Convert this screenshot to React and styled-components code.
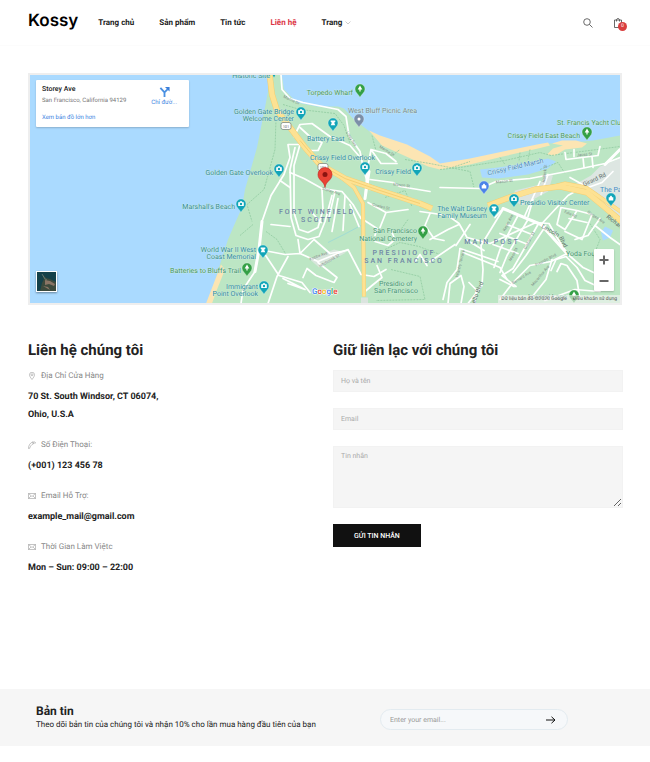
import React, {useState} from 'react'
import styled, {createGlobalStyle} from 'styled-components'

const navItems = ['Trang chủ', 'Sản phẩm', 'Tin tức', 'Liên hệ', 'Trang']

const contacts = [
  {icon: 'pin', label: 'Địa Chỉ Cửa Hàng', lines: ['70 St. South Windsor, CT 06074,', 'Ohio, U.S.A']},
  {icon: 'phone', label: 'Số Điện Thoại:', lines: ['(+001) 123 456 78']},
  {icon: 'mail', label: 'Email Hỗ Trợ:', lines: ['example_mail@gmail.com']},
  {icon: 'mail', label: 'Thời Gian Làm Việtc', lines: ['Mon – Sun: 09:00 – 22:00']},
]

const TEAL = '#12a5b8'
const GREEN = '#34a046'

// x, y is the tip of the pin
const pins = [
  {x: 360, y: 98, color: GREEN, kind: 'tree'},
  {x: 301, y: 121, color: TEAL, kind: 'camera'},
  {x: 333, y: 132, color: TEAL, kind: 'tower'},
  {x: 359, y: 128, color: '#7b8fa8', kind: 'dot'},
  {x: 365, y: 176, color: TEAL, kind: 'camera'},
  {x: 417, y: 177, color: TEAL, kind: 'camera'},
  {x: 279, y: 178, color: TEAL, kind: 'camera'},
  {x: 241, y: 213, color: TEAL, kind: 'camera'},
  {x: 263, y: 259, color: TEAL, kind: 'tower'},
  {x: 247, y: 277, color: GREEN, kind: 'tree'},
  {x: 264, y: 295, color: TEAL, kind: 'camera'},
  {x: 423, y: 240, color: GREEN, kind: 'tree'},
  {x: 484, y: 195, color: '#4a83e8', kind: 'bag'},
  {x: 494, y: 218, color: TEAL, kind: 'tower'},
  {x: 514, y: 208, color: TEAL, kind: 'camera'},
  {x: 587, y: 141, color: GREEN, kind: 'tree'},
  {x: 611, y: 207, color: TEAL, kind: 'bag'},
  {x: 574, y: 304, color: GREEN, kind: 'tree'},
]

const places = [
  {x: 270, y: 78, text: 'Historic Site', end: true},
  {x: 353, y: 95, text: 'Torpedo Wharf', end: true, tone: 'green'},
  {x: 294, y: 114, text: 'Golden Gate Bridge', end: true},
  {x: 294, y: 121, text: 'Welcome Center', end: true},
  {x: 348, y: 113, text: 'West Bluff Picnic Area', tone: 'gray'},
  {x: 307, y: 141, text: 'Battery East'},
  {x: 310, y: 160, text: 'Crissy Field Overlook'},
  {x: 411, y: 174, text: 'Crissy Field', end: true},
  {x: 273, y: 175, text: 'Golden Gate Overlook', end: true},
  {x: 235, y: 209, text: 'Marshall\'s Beach', end: true},
  {x: 256, y: 252, text: 'World War II West', end: true},
  {x: 256, y: 259, text: 'Coast Memorial', end: true},
  {x: 241, y: 273, text: 'Batteries to Bluffs Trail', end: true, tone: 'green'},
  {x: 258, y: 289, text: 'Immigrant', end: true},
  {x: 258, y: 296, text: 'Point Overlook', end: true},
  {x: 417, y: 233, text: 'San Francisco', end: true, tone: 'green'},
  {x: 417, y: 241, text: 'National Cemetery', end: true, tone: 'green'},
  {x: 379, y: 286, text: 'Presidio of', tone: 'green'},
  {x: 374, y: 293, text: 'San Francisco', tone: 'green'},
  {x: 487, y: 211, text: 'The Walt Disney', end: true},
  {x: 487, y: 218, text: 'Family Museum', end: true},
  {x: 520, y: 205, text: 'Presidio Visitor Center'},
  {x: 580, y: 138, text: 'Crissy Field East Beach', end: true, tone: 'green'},
  {x: 557, y: 125, text: 'St. Francis Yacht Club', tone: 'green'},
  {x: 600, y: 192, text: 'The Palace', tone: 'blue'},
  {x: 566, y: 256, text: 'Yoda Fountain', tone: 'green'},
  {x: 528, y: 299, text: 'Lovers\' Lane', tone: 'green'},
]

const areas = [
  {x: 317, y: 214, text: 'FORT WINFIELD'},
  {x: 317, y: 222, text: 'SCOTT'},
  {x: 404, y: 255, text: 'PRESIDIO OF'},
  {x: 404, y: 263, text: 'SAN FRANCISCO'},
  {x: 492, y: 244, text: 'MAIN POST'},
]

const streets = [
  {x: 283, y: 98, turn: 25, text: 'Marine Dr'},
  {x: 346, y: 133, turn: 58, text: 'Long Ave'},
  {x: 379, y: 148, turn: 32, text: 'Marine Dr'},
  {x: 393, y: 186, turn: 6, text: 'Mason St'},
  {x: 322, y: 190, turn: 18, text: 'Storey Ave'},
  {x: 496, y: 184, turn: -6, text: 'Mason St'},
  {x: 577, y: 157, turn: -5, text: 'Jauss St'},
  {x: 564, y: 213, turn: 24, text: 'Edie Rd'},
  {x: 587, y: 213, turn: 34, text: 'Gorgas Ave'},
  {x: 310, y: 261, turn: -20, text: 'Kobbe Ave'},
  {x: 320, y: 268, turn: -30, text: 'Hitchcock St'},
  {x: 372, y: 206, turn: 14, text: 'Cowles St'},
  {x: 458, y: 278, turn: -76, text: 'Infantry Terrace'},
  {x: 511, y: 262, turn: -62, text: 'Mesa St'},
  {x: 526, y: 250, turn: -62, text: 'Graham St'},
  {x: 505, y: 232, turn: -62, text: 'Keyes Ave'},
  {x: 536, y: 267, turn: -28, text: 'Presidio Blvd'},
  {x: 513, y: 285, turn: -32, text: 'Barnard Ave'},
  {x: 533, y: 287, turn: -50, text: 'Macarthur Ave'},
  {x: 545, y: 183, turn: -84, text: 'Halleck St'},
]

const roads = [
  'M281 75 L282 90 L290 99 L303 103 L338 110 L346 117 L349 136 L360 152 L364 172 L370 190',
  'M294 137 L300 125 L312 124 L330 137 L350 146 L362 160',
  'M300 128 L312 139 L322 143 L318 151 L309 151',
  'M303 145 L288 145 L290 158 L284 175 L271 196 L262 222 L259 250 L255 272 L243 290 L241 304',
  'M295 148 L290 170 L291 218 L296 236 L308 240 L319 237 L325 222 L332 196',
  'M300 145 L294 166 L294 213 L299 230 L308 233 L318 228 L323 210 L322 190',
  'M290 173 L304 179 L322 189 L342 192 L353 205 L361 219',
  'M259 250 L285 255 L300 254 L318 262 L340 253 L348 250 L361 275 L374 277 L386 270',
  'M288 257 L277 277 L268 304',
  'M263 252 L279 276 L302 283 L310 293',
  'M283 279 L305 290 L288 284',
  'M318 263 L337 278 L334 283 L316 276 L307 269 L303 278',
  'M298 240 L300 254 L314 240 L330 254 L347 251',
  'M335 192 L329 218 M345 196 L343 231 M350 205 L359 227 M338 199 L332 232',
  'M271 225 L290 227 M290 188 L280 181',
  'M365 198 L367 172 L371 150 L386 154 L396 162 M371 150 L381 164 L397 164',
  'M370 180 L393 183 L400 187 L430 192',
  'M368 203 L386 213 L408 210 M380 228 L386 213',
  'M375 242 L388 246 L395 240 L392 233',
  'M363 220 L377 229 L375 236',
  'M377 266 L382 278 L372 286 L365 292',
  'M440 188 L480 189 L496 182 L530 179 L572 171 L605 164 L620 158',
  'M565 153 L566 160 L598 156 L600 147 M574 157 L574 150 M583 158 L584 168 M592 157 L593 168',
  'M613 172 L602 183 L588 188 L570 178',
  'M420 212 L448 216 L459 224 L467 238 L490 244 L536 223 L549 224 L557 238 L567 254 L583 268 L600 276',
  'M495 218 L503 209 L515 214 L541 225 L568 196 L575 192',
  'M503 210 L481 246 L483 270 L482 286 L475 295 L468 304',
  'M470 225 L456 246 M463 253 L500 268 L507 280 M466 240 L484 251 M460 249 L498 262',
  'M518 216 L500 250 L494 268 M528 220 L507 256 L500 273 M538 225 L513 269 L502 276 L516 287',
  'M546 226 L526 256 L513 273 M507 225 L532 235 M500 234 L528 245 M493 245 L518 254',
  'M533 200 L528 217 M540 182 L524 218 M548 175 L541 195',
  'M561 208 L557 225 L565 230 L577 211 L561 208 M577 211 L592 215 L582 240 L565 232',
  'M600 219 L588 236 L575 240 M569 219 L587 223',
  'M567 254 L551 262 L530 266 L513 283 L500 300',
  'M552 260 L546 280 L530 300 M500 280 L514 287',
  'M551 271 L556 260 L566 257 L577 268 L585 281 L600 288',
  'M557 272 L561 264 L567 266 L577 281 L580 300',
  'M460 249 L457 270 L447 283 L443 300 M448 304 L450 284 L461 276 L464 287 L461 304',
  'M475 304 L476 290 L469 283',
  'M415 262 L420 255 L427 266 M595 226 L610 238 L620 245 M545 301 L575 290 L600 292',
  'M430 240 L448 230 L459 225 M455 245 L430 262',
  'M310 211 L321 223 M430 214 L425 226 L434 239 L444 241',
]

const trails = [
  'M276 120 L275 150 L264 190 L247 205 L252 222',
  'M283 105 L300 110 L335 114 L344 126 L350 144',
  'M372 136 L376 151 L392 156 L400 150',
  'M440 170 L460 168 L505 161 L540 153 L551 156 L620 147',
  'M405 160 L430 164 L470 172 L474 188 M452 168 L470 162',
  'M530 150 L528 160 M520 153 L519 162 M500 158 L505 165',
  'M385 250 L400 243 L419 247 L440 255 M391 270 L420 277 L425 300 L376 301',
  'M385 198 L405 191 L412 207 M408 220 L398 234',
  'M266 232 L277 240 L286 255 M240 236 L253 225',
  'M540 170 L558 163 L565 174 M590 224 L600 240 L593 258',
]

// the parkway runs underground between the two halves
const highway = 'M269 70L272 95 277 111 290 128 305 148 320 165 345 179 380 191 420 204 432 209M488 206L512 197 535 190 560 187 587 193 605 208 625 225'
const ramps = 'M335 173L354 188 363 204 364 297M350 181L370 187 392 195M542 190L565 184 586 188 622 213'

function InfoIcon({kind}) {
  return (
    <LineIcon viewBox="0 0 16 16" aria-hidden="true">
      {kind === 'pin' && <path d="M8 15C5 11 3 8.500 3 5.500a5 5 0 0 1 10 0C13 8.500 11 11 8 15zM8 3.500a2 2 0 1 0 0 4 2 2 0 0 0 0-4z"/>}
      {kind === 'phone' && <path d="M1 15C1 9 4 4 9 2l1.500 3.500L8 7C6 9 4 12 3.500 14.500zM9 2l1.500-.7 1.500 3.500-1.500.7M12 2c3-1 4 2 1.500 3.500"/>}
      {kind === 'mail' && <path d="M1 3h14v10H1zM1 3l7 6 7-6M1 13l5-5M15 13l-5-5"/>}
    </LineIcon>
  )
}

function Pin({x, y, color, kind}) {
  return (
    <g transform={`translate(${x} ${y})`}>
      <path d="M0 0C-1-3-5-5-5-8.500a5 5 0 0 1 10 0C5-5 1-3 0 0z" fill={color} stroke="#fff" strokeWidth="0.300"/>
      {kind === 'camera' && <path d="M-2.800-10.300h1.300l.6-.9h1.800l.6.9h1.300v3.800h-5.600zM0-9.700a1.200 1.200 0 1 0 0 2.400 1.200 1.200 0 0 0 0-2.400z" fill="#fff" fillRule="evenodd"/>}
      {kind === 'tower' && <path d="M-2.300-11h4.600v1.500h-.8v1.800l.8 1.500h-4.600l.8-1.500v-1.800h-.8z" fill="#fff"/>}
      {kind === 'tree' && <path d="M0-12l2.300 4H.6v2h-1.200v-2h-1.700z" fill="#fff"/>}
      {kind === 'bag' && <path d="M-2.300-9.300h1.200c0-2 2.200-2 2.200 0h1.200v3.300h-4.600z" fill="#fff"/>}
      {kind === 'dot' && <circle cy="-8.500" r="1.500" fill="#fff"/>}
    </g>
  )
}

function MapDrawing() {
  return (
    <MapSvg viewBox="30 75 590 229" preserveAspectRatio="xMidYMid slice" role="img" aria-label="Bản đồ Storey Ave">
      <rect x="0" y="60" width="700" height="260" fill="#aadaff"/>
      <path d="M268 70L268 92 265 108 257 148 245 190 242 208 234 226 228 240 219 268 207 310H660V130L620 136 593 141 573 143 548 144 537 148 503 155 470 162 440 167 430 161 407 150 380 140 367 130 353 119 344 109 338 107 317 107 297 103 284 90 281 70z" fill="#bce6c4"/>
      <path d="M369 131L380 136 407 145 430 157 440 164 470 159 503 152 537 145 548 143 550 146 538 149 503 157 470 165 440 170 428 167 404 156 382 146z" fill="#fce5b3"/>
      <path d="M552 144l10-3 14 0 11 3-5 4-17 2-10 6-8-1 6-6 10-3z" fill="#fce5b3"/>
      <path d="M221 265l4 5-8 20-5 14h-6z" fill="#fce5b3"/>
      <path d="M480 170l18-2 20-3 30-6 8 3-8 7-20 6-30 4-16-1z" fill="#aadaff"/>
      <path d="M601 233l4-6 8 4-3 7-7 3z" fill="#aadaff"/>
      <path d="M600 167l20-8v60l-20-16-25-18 16-9z" fill="#dde6e2"/>
      <path d="M515 191l25-6 6-10 7 1-5 16-26 14-10-6zM361 298h7v6h-7z" fill="#dbe4df"/>
      <path d="M310 260l24-10 12 3-27 15z" fill="#d8e6dc"/>
      <path d="M328 243l16-8 17-9" fill="none" stroke="#a0dcd5" strokeWidth="1"/>
      {trails.map((d) => <path key={d} d={d} fill="none" stroke="#8fcaa0" strokeWidth="0.800" strokeDasharray="2 1"/>)}
      <g fill="none" stroke="#fff" strokeLinejoin="round" strokeLinecap="round" strokeWidth="1.700">
        {roads.map((d) => <path key={d} d={d}/>)}
        <path d="M365 199L369 172M503 209L541 225 567 254M262 222L259 250 255 272M605 165L620 150" strokeWidth="3"/>
      </g>
      <g fill="none" strokeLinejoin="round">
        <path d={highway} stroke="#f5cf72" strokeWidth="6"/>
        <path d={ramps} stroke="#f5cf72" strokeWidth="4"/>
        <path d={highway} stroke="#fde293" strokeWidth="5"/>
        <path d={ramps} stroke="#fde293" strokeWidth="3"/>
        <path d="M300 141L320 165 345 179 380 191 420 204" stroke="#f5cf72" strokeWidth="1"/>
      </g>
      {[[286, 127], [323, 168]].map(([x, y]) => (
        <g key={x}>
          <rect x={x - 5} y={y - 4} width="10" height="7" rx="2" fill="#fff" stroke="#7f8a80" strokeWidth="0.800"/>
          <Shield x={x} y={y + 1}>101</Shield>
        </g>
      ))}
      {streets.map((s, i) => (
        <Street key={i} transform={`translate(${s.x} ${s.y}) rotate(${s.turn})`}>{s.text}</Street>
      ))}
      <Lincoln transform="translate(584 187) rotate(-25)">Girard Rd</Lincoln>
      <Lincoln transform="translate(541 228) rotate(30)">Lincoln</Lincoln>
      <Lincoln transform="translate(559 238) rotate(65)">Blvd</Lincoln>
      <Lincoln transform="translate(475 304) rotate(-68)">ello Blvd</Lincoln>
      <Lincoln transform="translate(606 218) rotate(38)">Richardson</Lincoln>
      <Place tone="blue" transform="translate(488 176) rotate(-13)">Crissy Field Marsh</Place>
      {areas.map((a) => <Area key={a.text} x={a.x} y={a.y}>{a.text}</Area>)}
      {places.map((p, i) => (
        <Place key={i} x={p.x} y={p.y} tone={p.tone} textAnchor={p.end ? 'end' : 'start'}>{p.text}</Place>
      ))}
      {pins.map((p, i) => <Pin key={i} {...p}/>)}
      <path d="M274 78l-2-4h4z" fill={TEAL}/>
      <path d="M325 188C324 181 318 181 318 175a7 7 0 0 1 14 0C332 181 326 181 325 188z" fill="#ea4335" stroke="#c5221f" strokeWidth="0.600"/>
      <circle cx="325" cy="175" r="2.500" fill="#8c1410"/>
      <Google x="312" y="294">
        <tspan fill="#4285f4">G</tspan><tspan fill="#ea4335">o</tspan><tspan fill="#fbbc05">o</tspan><tspan fill="#4285f4">g</tspan><tspan fill="#34a853">l</tspan><tspan fill="#ea4335">e</tspan>
      </Google>
    </MapSvg>
  )
}

function App() {
  const [email, setEmail] = useState('')

  return (
    <>
      <GlobalStyle/>
      <Header>
        <Logo href="#">Kossy</Logo>
        <Nav>
          {navItems.map((item) => (
            <NavLink key={item} href="#" $active={item === 'Liên hệ'}>
              {item}
              {item === 'Trang' && <Caret viewBox="0 0 6 4" aria-hidden="true"><path d="M0.500 0.500L3 3 5.500 0.500"/></Caret>}
            </NavLink>
          ))}
        </Nav>
        <Tools>
          <ToolButton aria-label="Tìm kiếm">
            <ToolIcon viewBox="0 0 10 10"><circle cx="4" cy="4" r="3.300"/><path d="M6.500 6.500L9.500 9.500"/></ToolIcon>
          </ToolButton>
          <ToolButton aria-label="Giỏ hàng">
            <ToolIcon viewBox="0 0 10 10"><path d="M1.500 2h7v7.500h-7zM3.500 3.500V2C3.500 0 6.500 0 6.500 2v1.500"/></ToolIcon>
            <Badge>0</Badge>
          </ToolButton>
        </Tools>
      </Header>

      <Main>
        <MapFrame>
          <MapDrawing/>
          <MapCard>
            <div>
              <CardTitle>Storey Ave</CardTitle>
              <CardText>San Francisco, California 94129</CardText>
              <CardLink href="#">Xem bản đồ lớn hơn</CardLink>
            </div>
            <Directions href="#">
              <svg viewBox="0 0 12 12" width="11" height="11" aria-hidden="true">
                <path d="M6 12V7L9.500 3.500M1.500 2L6 7" fill="none" stroke="#4a90e2" strokeWidth="2"/>
                <path d="M6.500 1H11.500V6z" fill="#3b7fd9"/>
              </svg>
              Chỉ đườ...
            </Directions>
          </MapCard>
          <Satellite aria-label="Vệ tinh">
            <svg viewBox="0 0 19 19" width="100%" height="100%">
              <rect width="19" height="19" fill="#14414a"/>
              <path d="M3 19L5 11 7 7 5 2 9 6 13 7 19 10V19z" fill="#3c4a3c"/>
              <path d="M8 8l5 1 5 3-1 2-5-2-4 1zM6 14l5 1 2 3" fill="#8a7464"/>
              <path d="M5 2l3 5 2 1" fill="none" stroke="#7f9691" strokeWidth="0.600"/>
            </svg>
          </Satellite>
          <Zoom>
            <ZoomButton aria-label="Phóng to"><svg viewBox="0 0 10 10" width="10" height="10"><path d="M5 0.500V9.500M0.500 5H9.500"/></svg></ZoomButton>
            <ZoomButton aria-label="Thu nhỏ"><svg viewBox="0 0 10 10" width="10" height="10"><path d="M0.500 5H9.500"/></svg></ZoomButton>
          </Zoom>
          <Terms><span>Dữ liệu bản đồ ©2020 Google</span><span>Điều khoản sử dụng</span></Terms>
        </MapFrame>

        <Columns>
          <section>
            <Title>Liên hệ chúng tôi</Title>
            {contacts.map((c) => (
              <Info key={c.label}>
                <InfoLabel><InfoIcon kind={c.icon}/>{c.label}</InfoLabel>
                {c.lines.map((line) => <InfoLine key={line}>{line}</InfoLine>)}
              </Info>
            ))}
          </section>
          <section>
            <Title>Giữ liên lạc với chúng tôi</Title>
            <Form onSubmit={(e) => e.preventDefault()}>
              <Field aria-label="Họ và tên" placeholder="Họ và tên"/>
              <Field aria-label="Email" type="email" placeholder="Email"/>
              <Message aria-label="Tin nhắn" placeholder="Tin nhắn"/>
              <Submit type="submit">GỬI TIN NHẮN</Submit>
            </Form>
          </section>
        </Columns>
      </Main>

      <Newsletter>
        <div>
          <NewsTitle>Bản tin</NewsTitle>
          <NewsText>Theo dõi bản tin của chúng tôi và nhận 10% cho lần mua hàng đầu tiên của bạn</NewsText>
        </div>
        <NewsForm onSubmit={(e) => e.preventDefault()}>
          <NewsInput aria-label="Email" placeholder="Enter your email..." value={email} onChange={(e) => setEmail(e.target.value)}/>
          <NewsButton type="submit" aria-label="Đăng ký">
            <svg viewBox="0 0 10 8" width="10" height="8"><path d="M0 4H9M5.500 0.800L9 4 5.500 7.200"/></svg>
          </NewsButton>
        </NewsForm>
      </Newsletter>
    </>
  )
}

export default App

const GlobalStyle = createGlobalStyle`
* {
  box-sizing: border-box;
}
body {
  margin: 0;
  background: #fff;
  color: #222;
  font-family: Roboto, "Liberation Sans", sans-serif;
  font-size: 8px;
  text-rendering: geometricPrecision;
}
button, input, textarea {
  font-family: inherit;
  text-rendering: inherit;
}
`
const Header = styled.header`
display: flex;
align-items: center;
height: 46px;
padding: 0 27px 0 28px;
border-bottom: 1px solid #fcfcfc;
`
const Logo = styled.a`
color: #000;
font-family: Inter, sans-serif;
font-size: 17px;
font-weight: 600;
line-height: 22px;
padding-bottom: 4px;
text-decoration: none;
`
const Nav = styled.nav`
display: flex;
gap: 25px;
margin-left: 20px;
`
const NavLink = styled.a`
display: flex;
align-items: center;
gap: 3px;
color: ${({$active}) => ($active ? '#dc3545' : '#222')};
font-size: 8px;
font-weight: 700;
line-height: 12px;
text-decoration: none;
`
const Caret = styled.svg`
width: 6px;
height: 4px;
fill: none;
stroke: #ccc;
`
const Tools = styled.div`
display: flex;
gap: 20px;
margin-left: auto;
`
const ToolButton = styled.button`
position: relative;
display: flex;
padding: 0;
border: 0;
background: none;
cursor: pointer;
`
const ToolIcon = styled.svg`
width: 10px;
height: 10px;
fill: none;
stroke: #444;
stroke-width: 0.8;
`
const Badge = styled.span`
position: absolute;
left: 5px;
top: 4px;
width: 9px;
height: 9px;
border-radius: 50%;
background: #d93f3f;
color: #fff;
font-size: 5px;
line-height: 9px;
text-align: center;
`
const Main = styled.main`
padding: 27px 27px 0 28px;
`
const MapFrame = styled.div`
position: relative;
height: 232px;
margin-right: 1px;
border: 2px solid #eee;
overflow: hidden;
`
const MapSvg = styled.svg`
display: block;
width: 100%;
height: 100%;
`
const tones = {green: '#3f9468', gray: '#6f8797', blue: '#4a86c5'}
const Place = styled.text`
fill: ${({tone}) => tones[tone] || '#2e8b98'};
stroke: #d9f0e6;
stroke-width: 0.6;
paint-order: stroke;
font-size: 7px;
`
const Area = styled.text`
fill: #6f86a6;
font-size: 7px;
font-weight: 500;
letter-spacing: 2px;
text-anchor: middle;
`
const Street = styled.text`
fill: #7f8f88;
font-size: 4px;
`
const Lincoln = styled.text`
fill: #5f6f6a;
font-size: 6px;
`
const Shield = styled.text`
fill: #666;
font-size: 4px;
text-anchor: middle;
`
const Google = styled.text`
font-size: 8px;
font-weight: 500;
stroke: #fff;
stroke-width: 1;
paint-order: stroke;
`
const MapCard = styled.div`
position: absolute;
left: 6px;
top: 5px;
display: flex;
justify-content: space-between;
width: 153px;
height: 47px;
padding: 4px 12px 0 6px;
border-radius: 1px;
background: #fff;
box-shadow: 0 1px 2px rgba(0, 0, 0, 0.2);
`
const CardTitle = styled.div`
font-size: 7px;
font-weight: 500;
line-height: 11px;
`
const CardText = styled.div`
color: #777;
font-size: 6px;
line-height: 11px;
`
const CardLink = styled.a`
display: block;
margin-top: 7px;
color: #3a84df;
font-size: 6px;
line-height: 10px;
text-decoration: none;
`
const Directions = styled.a`
display: flex;
flex-direction: column;
align-items: center;
gap: 2px;
padding-top: 2px;
color: #3a84df;
font-size: 6px;
line-height: 8px;
text-decoration: none;
`
const Satellite = styled.button`
position: absolute;
left: 6px;
bottom: 11px;
width: 21px;
height: 21px;
padding: 0;
border: 1px solid #fff;
background: #14414a;
box-shadow: 0 1px 2px rgba(0, 0, 0, 0.4);

svg {
  display: block;
}
`
const Zoom = styled.div`
position: absolute;
right: 6px;
bottom: 12px;
display: flex;
flex-direction: column;
width: 20px;
border-radius: 1px;
background: #fff;
box-shadow: 0 1px 2px rgba(0, 0, 0, 0.2);
`
const ZoomButton = styled.button`
display: flex;
align-items: center;
justify-content: center;
height: 21px;
padding: 0;
border: 0;
background: none;

svg {
  stroke: #666;
  stroke-width: 2;
}
`
const Terms = styled.div`
position: absolute;
right: 0;
bottom: 0;
display: flex;
gap: 6px;
padding: 0 3px;
background: rgba(245, 245, 245, 0.6);
color: #555;
font-size: 5px;
line-height: 8px;
`
const Columns = styled.div`
display: grid;
grid-template-columns: 1fr 1fr;
gap: 15px;
margin-top: 35px;
padding-bottom: 97px;
`
const Title = styled.h2`
margin: 0 0 10px;
font-size: 15px;
font-weight: 700;
line-height: 20px;
`
const Info = styled.div`
margin-bottom: 15px;
`
const InfoLabel = styled.div`
display: flex;
align-items: center;
gap: 5px;
margin-bottom: 6px;
color: #888;
font-size: 8px;
line-height: 12px;
`
const LineIcon = styled.svg`
width: 8px;
height: 8px;
fill: none;
stroke: #888;
`
const InfoLine = styled.div`
font-size: 9px;
font-weight: 700;
line-height: 18px;
`
const Form = styled.form`
display: flex;
flex-direction: column;
align-items: flex-start;
gap: 16px;
`
const Field = styled.input`
width: 100%;
height: 22px;
padding: 0 7px;
border: 1px solid #f2f2f2;
background: #f5f5f5;
font-size: 7px;
outline: none;

&::placeholder {
  color: #aaa;
}
`
const Message = styled(Field).attrs({as: 'textarea'})`
display: block;
height: 62px;
padding: 5px 7px;
resize: vertical;
`
const Submit = styled.button`
height: 23px;
padding: 0 21px;
border: 0;
background: #111;
color: #fff;
font-size: 7px;
font-weight: 500;
cursor: pointer;
`
const Newsletter = styled.section`
display: flex;
justify-content: space-between;
align-items: center;
height: 57px;
padding: 0 82px 0 36px;
background: #f6f6f6;
`
const NewsTitle = styled.h3`
margin: 0;
font-size: 12px;
font-weight: 700;
line-height: 16px;
`
const NewsText = styled.p`
margin: 0;
padding-bottom: 2px;
line-height: 12px;
`
const NewsForm = styled.form`
display: flex;
align-items: center;
width: 188px;
height: 21px;
margin-top: 4px;
padding: 0 11px 0 9px;
border: 1px solid #e3ebf0;
border-radius: 11px;
background: #f6f8fa;
`
const NewsInput = styled.input`
flex: 1;
min-width: 0;
padding: 0;
border: 0;
background: none;
font-size: 7px;
outline: none;

&::placeholder {
  color: #999;
}
`
const NewsButton = styled.button`
display: flex;
padding: 0;
border: 0;
background: none;
cursor: pointer;

svg {
  fill: none;
  stroke: #111;
  stroke-width: 1;
}
`
